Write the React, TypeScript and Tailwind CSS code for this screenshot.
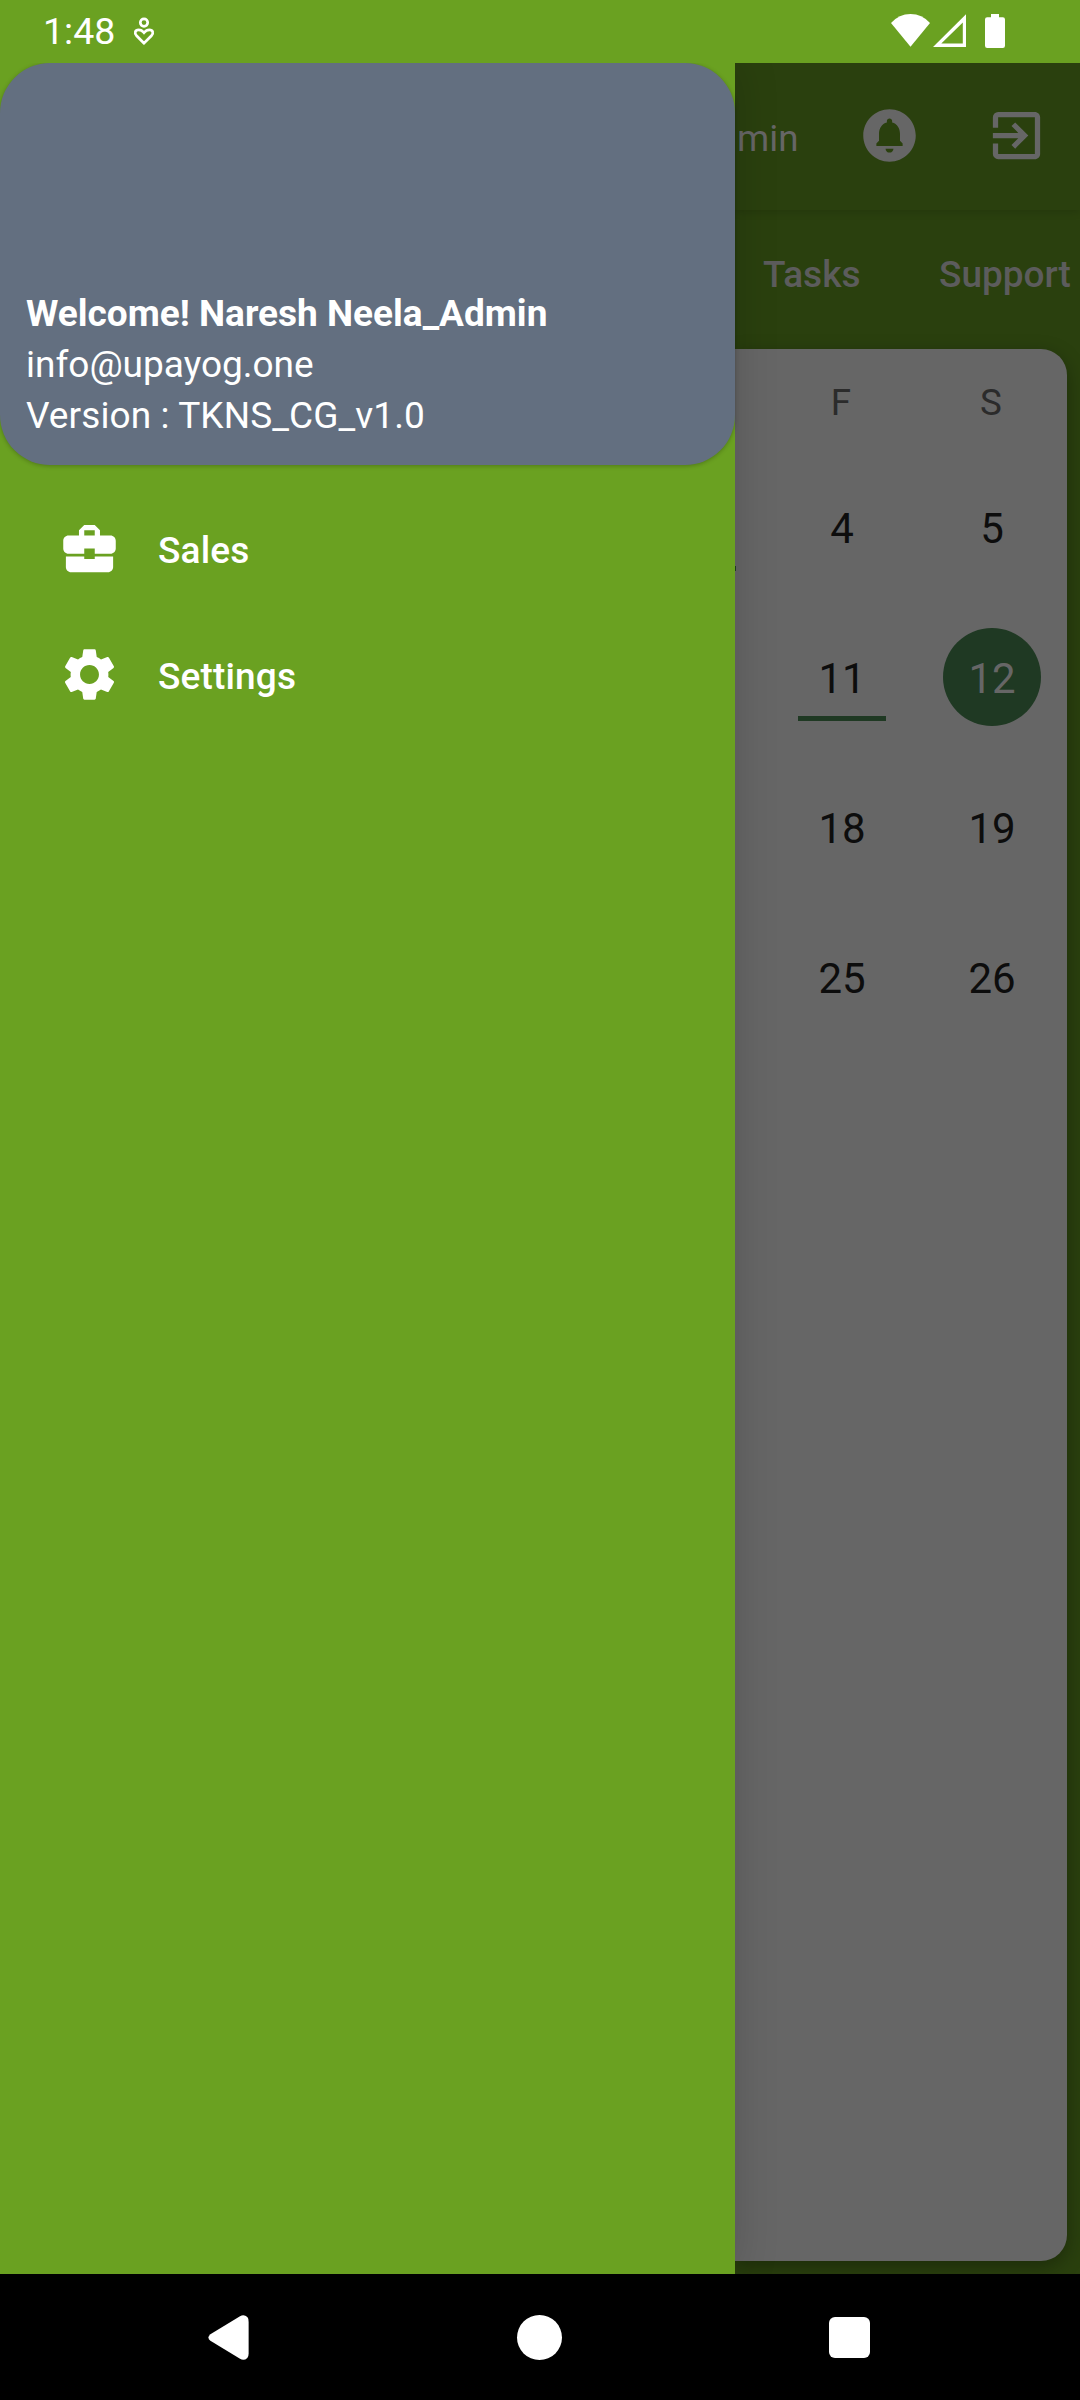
import type { ReactNode } from "react";
import { MdBusinessCenter, MdCircleNotifications, MdExitToApp, MdSettings } from "react-icons/md";

function StatusBar() {
  return (
    <header className="flex h-[63px] shrink-0 items-start justify-between bg-[#6aa121] pl-[43px] pr-[75px] text-white">
      <div className="flex items-start">
        <span className="mt-[9px] w-[73px] text-[37.5px] leading-[44px]">1:48</span>
        <svg className="ml-[17px] mt-[17px]" width="22" height="29" viewBox="0 0 22 29" fill="none" stroke="white" strokeWidth="2.7">
          <circle cx="11" cy="5.6" r="3.7" />
          <path d="M11 26.2 L3.6 18.8 C1 16 2.2 12.8 5.6 12.8 C8 12.8 9.6 14 11 15.7 C12.4 14 14 12.8 16.4 12.8 C19.8 12.8 21 16 18.4 18.8 Z" />
        </svg>
      </div>
      <div className="mt-[14px] flex items-start">
        <svg width="39" height="33" viewBox="0 0 39 33" fill="white">
          <path d="M0 9 Q8 0 19.5 0 Q31 0 39 9 L19.5 32.8 Z" />
        </svg>
        <svg className="ml-[3px]" width="33" height="33" viewBox="0 0 33 33" fill="white" fillRule="evenodd">
          <path d="M0 33 L33 .3 V33 Z M8.3 29.6 H29.8 V8.4 Z" />
        </svg>
        <svg className="ml-[19px]" width="20" height="34" viewBox="0 0 20 34" fill="white">
          <path d="M6 0 H14 V3.2 H17.8 Q20 3.2 20 5.4 V31.8 Q20 34 17.8 34 H2.2 Q0 34 0 31.8 V5.4 Q0 3.2 2.2 3.2 H6 Z" />
        </svg>
      </div>
    </header>
  );
}

function MenuItem({ icon, label }: { icon: ReactNode; label: string }) {
  return (
    <li className="flex h-[126px] items-center pl-[58px] text-[37px] font-medium tracking-[0.15px]">
      <span className="mb-px text-[63px]">{icon}</span>
      <span className="ml-[37px] mt-[3px]">{label}</span>
    </li>
  );
}

function Drawer() {
  return (
    <aside className="relative z-10 w-[735px] shrink-0 bg-[#6aa121] text-white shadow-[0_0_42px_rgba(0,0,0,0.16)]">
      <div className="flex h-[402px] flex-col justify-end rounded-[50px] bg-[#636f80] pb-[24px] pl-[26px] text-[37px] leading-[51px] shadow-[0_1px_4px_rgba(0,0,0,0.25)]">
        <p className="font-bold">Welcome! Naresh Neela_Admin</p>
        <p>info@upayog.one</p>
        <p className="tracking-[0.1px]">Version : TKNS_CG_v1.0</p>
      </div>
      <ul className="pt-[21px]">
        <MenuItem icon={<MdBusinessCenter />} label="Sales" />
        <MenuItem icon={<MdSettings />} label="Settings" />
      </ul>
    </aside>
  );
}

const weeks = [
  ["4", "5"],
  ["11", "12"],
  ["18", "19"],
  ["25", "26"],
];

function Day({ day }: { day: string }) {
  if (day === "12") {
    return (
      <div className="flex h-[98px] w-[98px] items-center justify-center rounded-full bg-[#1f3923] text-[#666666]">
        <span className="pt-[3px]">{day}</span>
      </div>
    );
  }
  return (
    <div className="relative flex h-[98px] w-[88px] items-center justify-center">
      <span className="pt-[3px]">{day}</span>
      {day === "11" && <span className="absolute bottom-[5px] left-0 h-[5px] w-[88px] bg-[#1f3923]" />}
    </div>
  );
}

function Calendar() {
  return (
    <section className="relative mb-[13px] mr-[13px] flex-1 rounded-r-[26px] bg-[#666666] pl-[32px] shadow-[0_6px_20px_rgba(0,0,0,0.32)]">
      <div className="-ml-px grid grid-cols-[150px_150px] pt-[32px] text-center text-[36.75px] leading-[44px] text-[#2b2b2b]">
        <span>F</span>
        <span>S</span>
      </div>
      <div className="mt-[27px] grid auto-rows-[150px] grid-cols-[150px_150px] place-items-center text-[42px] text-[#0d0d0d]">
        {weeks.flat().map((day) => (
          <Day key={day} day={day} />
        ))}
      </div>
      <span className="absolute left-0 top-[217px] z-20 h-[5px] w-px bg-[#1f3923]" />
    </section>
  );
}

function DimmedPage() {
  return (
    <main className="flex w-[345px] flex-col overflow-hidden bg-[#2a400e]">
      <div className="flex h-[147px] shrink-0 items-center pl-[2px] text-[#666666] shadow-[0_2px_8px_rgba(0,0,0,0.14)]">
        <span className="mt-[4px] w-[121px] text-[36.75px]">min</span>
        <MdCircleNotifications className="mb-[2px] size-[63px]" />
        <MdExitToApp className="mb-[2px] ml-[64px] size-[63px]" />
      </div>
      <nav className="flex h-[139px] shrink-0 items-center whitespace-nowrap pb-[10px] pl-[28px] text-[37px] font-medium text-[#5c5c5c]">
        <span className="w-[176px]">Tasks</span>
        <span>Support</span>
      </nav>
      <Calendar />
    </main>
  );
}

function NavigationBar() {
  return (
    <footer className="flex h-[126px] shrink-0 items-center bg-black pl-[208px]">
      <svg width="41" height="45" viewBox="0 0 41 45" fill="white">
        <path d="M2.4 19.2 L32 1.2 Q36 -1.2 39.3 2.1 Q40.6 3.5 40.6 6.5 V38.5 Q40.6 41.5 39.3 42.9 Q36 46.2 32 43.8 L2.4 25.8 Q-1.6 22.5 2.4 19.2 Z" />
      </svg>
      <span className="ml-[268px] size-[45px] rounded-full bg-white" />
      <span className="ml-[267px] size-[41px] rounded-[6px] bg-white" />
    </footer>
  );
}

export default function App() {
  return (
    <div className="flex h-[2400px] w-[1080px] flex-col overflow-hidden font-['Roboto',sans-serif]">
      <StatusBar />
      <div className="flex min-h-0 flex-1 overflow-hidden">
        <Drawer />
        <DimmedPage />
      </div>
      <NavigationBar />
    </div>
  );
}
